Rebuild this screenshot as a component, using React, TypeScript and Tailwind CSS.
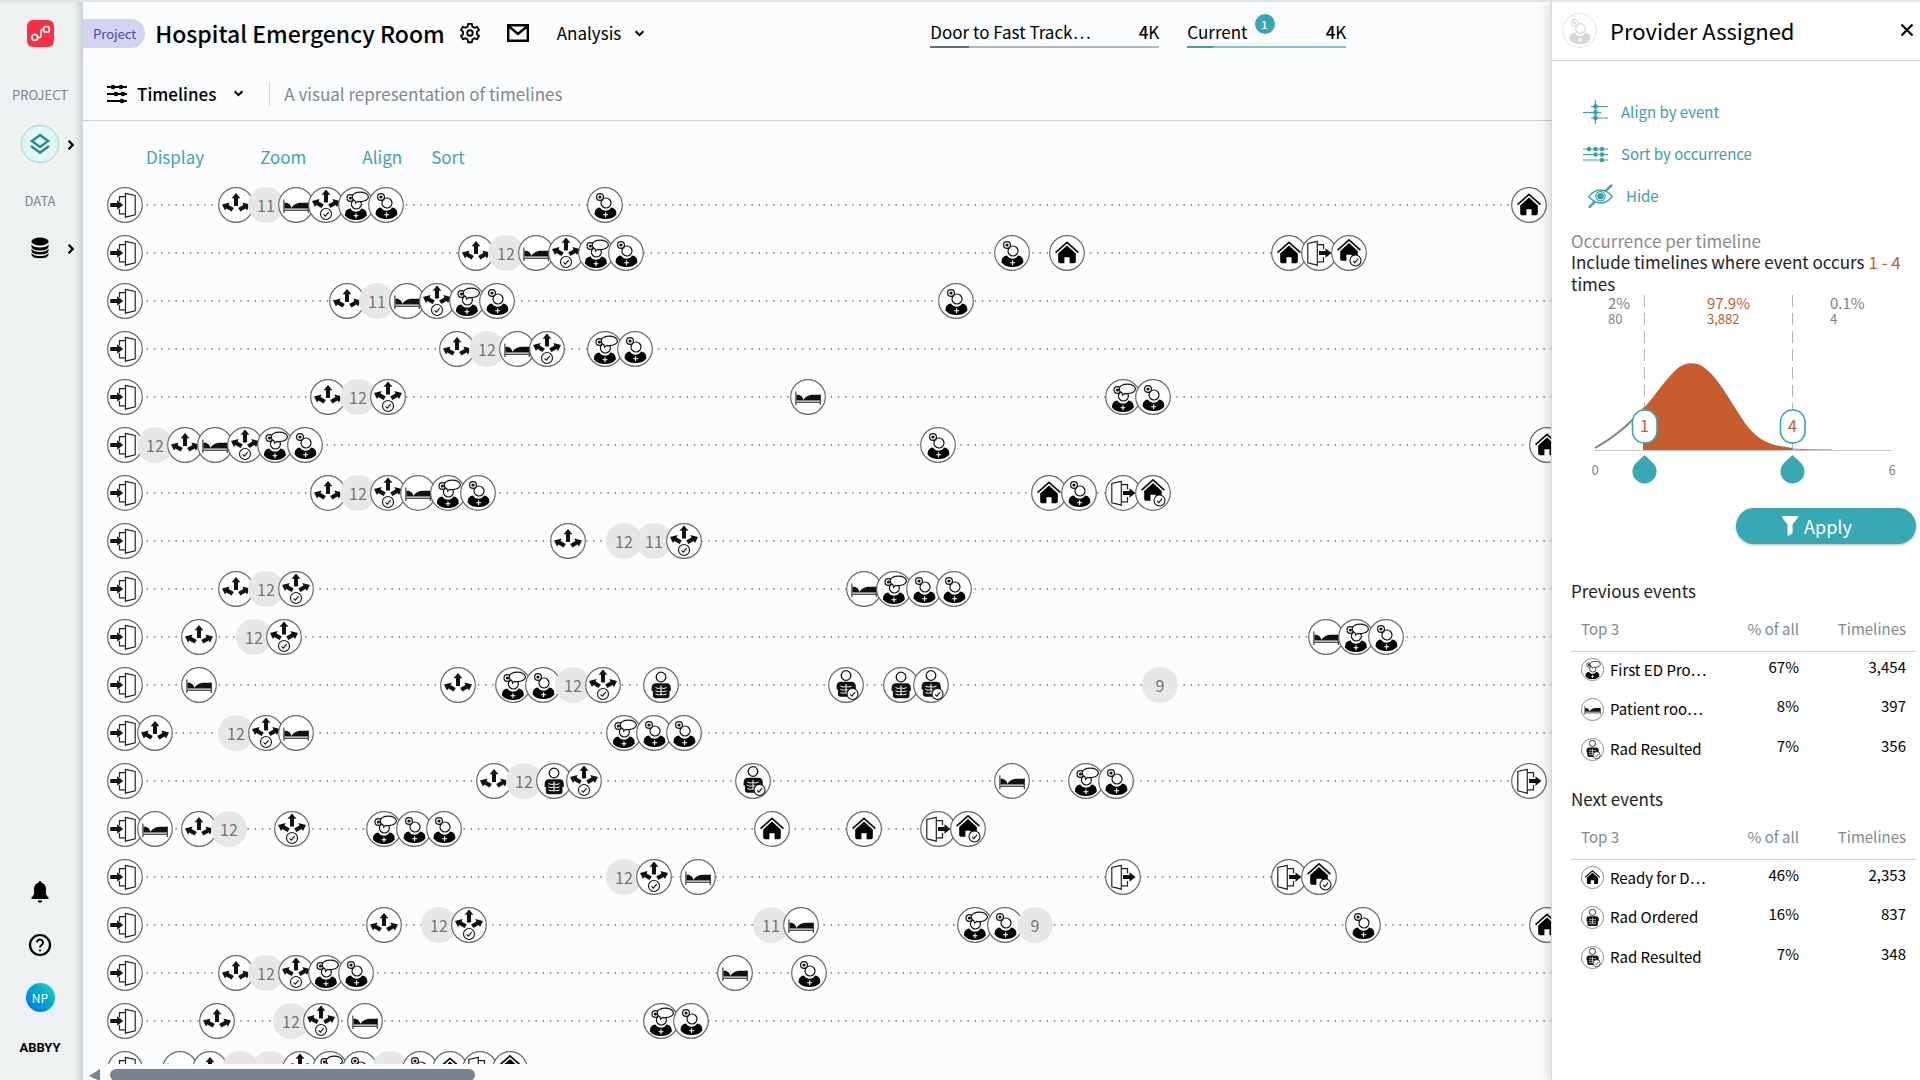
import React from "react";

type Kind = "entry" | "exit" | "triage" | "triaged" | "bed" | "provider" | "first" | "rad" | "radDone" | "home" | "homeDone";
type Mark = { x: number; kind?: Kind; count?: number };
type Row = { marks: Mark[]; end?: number };

const CODES: Record<string, Kind> = {
  E: "entry", X: "exit", A: "triage", S: "triaged", B: "bed", P: "provider",
  F: "first", R: "rad", C: "radDone", H: "home", D: "homeDone",
};

/** "X:item item" groups: X is the first centre, following items sit 30px apart. */
function row(spec: string, ends = false): Row {
  const marks: Mark[] = [];
  for (const group of spec.split(" ")) {
    const [start, items] = group.split(":");
    items.split(",").forEach((item, i) => {
      const x = Number(start) + i * 30;
      marks.push(CODES[item] ? { x, kind: CODES[item] } : { x, count: Number(item) });
    });
  }
  return { marks, end: ends ? marks[marks.length - 1].x : undefined };
}

const ROWS: Row[] = [
  row("42:E 153:A,11,B,S,F,P 522:P 1446:H"),
  row("42:E 393:A,12,B,S,F,P 929:P 984:H 1206:H,X,D", true),
  row("42:E 264:A,11,B,S,F,P 873:P"),
  row("42:E 374:A,12,B,S 522:F,P"),
  row("42:E 245:A,12,S 725:B 1040:F,P"),
  row("42:E 72:12,A,B,S,F,P 855:P 1464:H"),
  row("42:E 245:A,12,S,B,F,P 966:H,P 1040:X,D", true),
  row("42:E 485:A 541:12,11,S"),
  row("42:E 153:A,12,S 781:B,F,P,P"),
  row("42:E 116:A 171:12,S 1243:B,F,P"),
  row("42:E 116:B 375:A 430:F,P,12,S 578:R 763:C 818:R,C 1077:9"),
  row("42:E 72:A 153:12,S,B 541:F,P,P"),
  row("42:E 411:A,12,R,S 670:C 929:B 1003:F,P 1446:X"),
  row("42:E 72:B 116:A,12 209:S 301:F,P,P 689:H 781:H 855:X,D", true),
  row("42:E 541:12,S 615:B 1040:X 1206:X,D", true),
  row("42:E 301:A 356:12,S 688:11,B 892:F,P,9 1280:P 1464:H"),
  row("42:E 153:A,12,S,F,P 652:B 726:P"),
  row("42:E 134:A 208:12,S 282:B 578:F,P"),
  row("42:E 97:B,A,12,12,S,F,P,9,P,H,X,D", true),
];

function Check({ cx, cy }: { cx: number; cy: number }) {
  return (
    <g fill="#fff" stroke="#111" strokeWidth="1.1">
      <circle cx={cx} cy={cy} r="5.5" />
      <path d={`M${cx - 2.4} ${cy + 0.3}l1.7 1.8 3.4-4`} fill="none" />
    </g>
  );
}

const Arrows = () => (
  <g fill="#111">
    <path d="M18 6l4.4 5.200h-2.400v7.800h-4v-7.800h-2.400z" />
    <path d="M4 17.400l7.600-1.800-1 2.400 5.200 3-2.200 3.400-5.200-3-1.400 2z" />
    <path d="M32 17.400l-7.600-1.800 1 2.400-5.200 3 2.200 3.400 5.200-3 1.400 2z" />
  </g>
);

const House = () => (
  <g>
    <path d="M6.600 17.600L18 7.400l11.400 10.200" fill="none" stroke="#111" strokeWidth="1.800" />
    <path d="M18 10.600l8.800 7.800V26.400q0 1.800-1.800 1.800h-4.400v-6h-5.200v6H11q-1.800 0-1.800-1.800V18.400z" fill="#000" />
  </g>
);

const Body = () => (
  <g>
    <path d="M7.600 27.400c0-4.600 2-6.600 5.400-7 1.400 2.300 3.400 3.300 5.600 3.300s4.200-1 5.400-3.300c3.400.4 5.400 2.400 5.400 7-2.400 3-6 4.600-10.800 4.600S9.800 30.400 7.600 27.400z" fill="#000" />
    <path d="M18.600 25.200v5M16.100 27.700h5" stroke="#fff" strokeWidth="1.100" />
  </g>
);

const Scope = () => (
  <g>
    <circle cx="19" cy="16" r="5" fill="#fff" stroke="#111" strokeWidth="1.200" />
    <circle cx="13" cy="10" r="3.400" fill="#fff" stroke="#111" strokeWidth="1.200" />
    <circle cx="13" cy="10" r="1.600" fill="#111" />
  </g>
);

const Ribs = () => (
  <g>
    <circle cx="18" cy="10" r="4.800" fill="#fff" stroke="#111" strokeWidth="1.300" />
    <path d="M13 16.200h10.400q4.400 0 4.400 5v2.800h-1.300v4.500q0 2.700-2.700 2.700H12.600q-2.700 0-2.700-2.700V24H8.600v-2.800q0-5 4.400-5z" fill="#111" />
    <path d="M18 18.500v10M12.500 20.500c2 1.400 4 .8 5.300.6M23.500 20.500c-2 1.400-4 .8-5.300.6M12.300 23.700c2 1.400 4 .8 5.500.6M23.700 23.700c-2 1.400-4 .8-5.500.6M12.500 27c2 1.200 4 .6 5.300.4M23.500 27c-2 1.200-4 .6-5.300.4" fill="none" stroke="#fff" strokeWidth="1" />
  </g>
);

function Glyph({ kind }: { kind: Kind }) {
  switch (kind) {
    case "entry":
      return (
        <g>
          <path d="M18.500 9.700h-6v4.500M12.500 22v4.800h6" fill="none" stroke="#222" strokeWidth="1.200" />
          <path d="M18.500 6.400l9.700 2v19.400l-9.700 2.400z" fill="#fff" stroke="#222" strokeWidth="1.200" />
          <path d="M3.200 16h7v-2.800l6 4.800-6 4.800V20h-7z" fill="#111" />
        </g>
      );
    case "exit":
      return (
        <g>
          <path d="M16.500 9.700h6v4.500M22.500 22v4.800h-6" fill="none" stroke="#222" strokeWidth="1.200" />
          <path d="M16.300 6.400l-9.500 2v19.400l9.500 2.400z" fill="#fff" stroke="#222" strokeWidth="1.200" />
          <path d="M18 16h6.500v-2.800l6 4.800-6 4.800V20H18z" fill="#111" />
        </g>
      );
    case "triage":
      return <Arrows />;
    case "triaged":
      return (
        <g>
          <g transform="translate(0 -3.500)"><Arrows /></g>
          <Check cx={18} cy={27} />
        </g>
      );
    case "bed":
      return (
        <g>
          <path d="M5.900 12.500v13.500M30.300 15.500v10.500" stroke="#333" strokeWidth="1.100" />
          <path d="M6.500 15.800c4-.6 6.300 2 6.800 5 2.500-3.600 5.500-5 10-5.100h7v5.900H6.500z" fill="#111" />
          <path d="M6 23.300h24.300" stroke="#555" strokeWidth="1.500" />
        </g>
      );
    case "provider":
      return <g><Body /><Scope /></g>;
    case "first":
      return (
        <g>
          <g transform="translate(-.6 1)"><Body /><Scope /></g>
          <path d="M17.600 16.200l-.6-2.300c-1.800-.8-2.800-2.200-2.800-4C14.200 7.300 17.800 5.200 22.300 5.200s8.100 2.100 8.100 4.700-3.600 4.700-8.100 4.700c-.9 0-1.900-.1-2.700-.3z" fill="#fff" stroke="#111" strokeWidth="1.200" />
        </g>
      );
    case "rad":
      return <Ribs />;
    case "radDone":
      return <g><g transform="translate(0 -1.500)"><Ribs /></g><Check cx={24.5} cy={27} /></g>;
    case "home":
      return <House />;
    case "homeDone":
      return <g><g transform="translate(0 -2.500)"><House /></g><Check cx={24.5} cy={25.5} /></g>;
  }
}

function EventIcon({ kind, className }: { kind: Kind; className: string }) {
  return (
    <svg viewBox="0 0 36 36" className={className} aria-hidden="true">
      <circle cx="18" cy="18" r="17.300" fill="#fff" stroke="#6b6b6b" strokeWidth="1.200" />
      <Glyph kind={kind} />
    </svg>
  );
}

function Chevron({ className }: { className: string }) {
  return (
    <svg viewBox="0 0 10 10" className={className} fill="none" stroke="#000" strokeWidth="1.800" aria-hidden="true">
      <path d="M1.500 3l3.500 3.500L8.500 3" />
    </svg>
  );
}

function Sidebar() {
  return (
    <nav className="flex w-[83px] shrink-0 flex-col items-center bg-[#edf1f2] pr-[3px] shadow-[inset_-8px_0_7px_-5px_#c3c8ca]">
      <a href="#home" aria-label="Home" className="mt-[18px]">
        <svg viewBox="0 0 27 27" className="size-[27px]">
          <rect width="27" height="27" rx="6" fill="#fb2f41" />
          <g fill="none" stroke="#fff" strokeWidth="1.700">
            <circle cx="7.700" cy="17.500" r="3" />
            <path d="M10.700 17.500h1.500q1.800 0 1.800-1.800v-4.600q0-1.800 1.800-1.800h1" />
            <rect x="16.800" y="6.600" width="5.400" height="5.400" rx="1" />
          </g>
        </svg>
      </a>
      <span className="mt-[38px] text-[13px] leading-5 text-[#7b858c]">PROJECT</span>
      <button aria-label="Project" className="mt-5 grid size-[38px] place-items-center rounded-full border border-[#8ed5d6] bg-[#e2f6f7]">
        <svg viewBox="0 0 22 22" className="size-[22px]" fill="none" stroke="#2c8a90" strokeWidth="2.500">
          <path d="M11 2l8 6-8 6-8-6zM2 13l9 6.800 9-6.800" />
        </svg>
      </button>
      <div className="relative h-0 w-full">
        <Chevron className="absolute -top-6 right-[3px] size-3 -rotate-90" />
      </div>
      <span className="mt-7 text-[13px] leading-5 text-[#7b858c]">DATA</span>
      <button aria-label="Data" className="mt-[26px] grid size-[22px] place-items-center">
        <svg viewBox="0 0 20 22" className="h-[22px] w-5">
          <ellipse cx="10" cy="4.500" rx="8.500" ry="4" />
          <path d="M1.500 7.500q2 3 8.500 3t8.500-3V10q-1 3.500-8.500 3.500T1.500 10zM1.500 12q2 3 8.500 3t8.500-3v2q-1 3.500-8.500 3.500T1.500 14zM1.500 16q2 3 8.500 3t8.500-3v1.800q-1 3.500-8.500 3.500t-8.500-3.500z" />
        </svg>
      </button>
      <div className="relative h-0 w-full">
        <Chevron className="absolute -top-4 right-[3px] size-3 -rotate-90" />
      </div>
      <button aria-label="Notifications" className="mt-auto">
        <svg viewBox="0 0 18 22" className="h-[22px] w-[18px]">
          <path d="M9 0q1.600 0 1.600 1.700Q15 3 15 8.500v5l2.500 3.300V18H.5v-1.200L3 13.500v-5Q3 3 7.400 1.700 7.400 0 9 0zM6.800 19.500h4.400Q11 21.700 9 21.700t-2.200-2.200z" />
        </svg>
      </button>
      <button aria-label="Help" className="mt-[30px]">
        <svg viewBox="0 0 24 24" className="size-6" fill="none" stroke="#000">
          <circle cx="12" cy="12" r="10" strokeWidth="2.200" />
          <path d="M9 9.500a3 3 0 1 1 4.600 2.500Q12 13 12 14.500" strokeWidth="2" />
          <circle cx="12" cy="17.500" r=".7" fill="#000" />
        </svg>
      </button>
      <button className="mt-[26px] size-[29px] rounded-full bg-linear-to-tr from-[#1668e8] to-[#2bd9b0] text-xs leading-[29px] text-white">NP</button>
      <span className="mt-[26px] mb-[22px] font-[Roboto,sans-serif] text-[13px] leading-5 font-bold text-black">ABBYY</span>
    </nav>
  );
}

function Header() {
  return (
    <header className="border-b border-[#ccd1d4] pt-[3px]">
      <div className="flex h-14 items-center">
        <span className="h-[29px] rounded-r-[14px] bg-[#d3d4ef] pr-[9px] pl-[10px] text-[13px] leading-[29px] text-[#4b45b5]">Project</span>
        <h1 className="ml-[10px] text-[23px] leading-8 font-medium text-black">Hospital Emergency Room</h1>
        <button aria-label="Settings" className="ml-[14px]">
          <svg viewBox="0 0 24 24" className="size-[22px]" fill="none" stroke="#000" strokeWidth="2">
            <path d="M10 2h4l.6 3 2.300 1.300 2.900-1 2 3.500-2.300 2v2.500l2.300 2-2 3.500-2.900-1-2.300 1.300-.6 3h-4l-.6-3-2.300-1.300-2.900 1-2-3.500 2.300-2v-2.500l-2.300-2 2-3.500 2.900 1L9.400 5z" />
            <circle cx="12" cy="12" r="3" />
          </svg>
        </button>
        <button aria-label="Messages" className="ml-[26px]">
          <svg viewBox="0 0 22 18" className="h-[18px] w-[22px]" fill="none" stroke="#000" strokeWidth="2.400">
            <path d="M1.200 1.200h19.600v15.600H1.200zM2 2.500l9 7.500 9-7.500" />
          </svg>
        </button>
        <button className="ml-7 flex items-center gap-[13px] text-[17px] leading-6 text-black">
          Analysis <Chevron className="size-[11px]" />
        </button>
        <div className="ml-[285px] w-[229px]">
          <div className="flex justify-between text-[17px] leading-7 text-black">
            <span>Door to Fast Track…</span>
            <span><span className="font-medium">4</span>K</span>
          </div>
          <div className="flex h-0.5 bg-[#b0b6be]"><div className="w-[39px] bg-[#666a70]" /></div>
        </div>
        <div className="ml-7 w-[159px]">
          <div className="flex text-[17px] leading-7 text-black">
            <span>Current</span>
            <span className="-mt-1 ml-[7px] size-5 rounded-full bg-[#37a7b2] text-center text-[11px] leading-5 font-medium text-white">1</span>
            <span className="ml-auto"><span className="font-medium">4</span>K</span>
          </div>
          <div className="flex h-0.5 bg-[#7ec8cd]"><div className="w-[26px] bg-[#3fa3ad]" /></div>
        </div>
      </div>
      <div className="flex h-[59px] items-center pt-[6px] pl-6">
        <button className="flex items-center text-[17px] leading-6 font-medium text-black">
          <svg viewBox="0 0 20 20" className="size-5" stroke="#000" strokeWidth="1.800" aria-hidden="true">
            <path d="M0 3h20M0 10h20M0 17h20" />
            <g stroke="none"><circle cx="6" cy="3" r="2.300" /><circle cx="14" cy="3" r="2.300" /><circle cx="9" cy="10" r="2.300" /><circle cx="16" cy="10" r="2.300" /><circle cx="15" cy="17" r="2.300" /></g>
          </svg>
          <span className="ml-[10px]">Timelines</span>
          <Chevron className="ml-[17px] size-[11px]" />
        </button>
        <span className="ml-[25px] h-6 w-px bg-[#d0d4d8]" />
        <p className="ml-[14px] text-[17px] leading-6 text-[#808990]">A visual representation of timelines</p>
      </div>
    </header>
  );
}

function Timeline({ data }: { data: Row }) {
  return (
    <div className="relative h-12">
      <svg className="absolute inset-y-0 left-[42px] h-full w-[calc(100%-42px)]" aria-hidden="true">
        <line x1="0" x2={data.end ? data.end - 42 : "100%"} y1="24" y2="24" stroke="#777" strokeWidth="1.500" strokeDasharray="1.500 5.700" />
      </svg>
      {data.marks.map((m, i) =>
        m.kind ? (
          <div key={i} className="absolute top-[6px] -ml-[18px] size-9" style={{ left: m.x }}>
            <EventIcon kind={m.kind} className="size-9" />
          </div>
        ) : (
          <div key={i} className="absolute top-[6px] -ml-[18px] size-9 rounded-full bg-[#e7e7e7] text-center text-base leading-9 text-[#757575]" style={{ left: m.x }}>
            {m.count}
          </div>
        ),
      )}
    </div>
  );
}

function Distribution() {
  return (
    <div className="relative h-[200px]">
      <svg viewBox="0 0 345 200" className="h-[200px] w-[345px]" role="img" aria-label="Occurrence distribution">
        <path d="M73.500 0v155M221.500 0v155" stroke="#b4b4b4" strokeWidth="1" strokeDasharray="12 6" />
        <path d="M24 153C45 141 56 131 73.500 113" fill="none" stroke="#7a8490" strokeWidth="2" />
        <path d="M72 155V114C84 101 96 82 107 73 114 67 124 67 131 71 149 83 160 109 177 132 188 145 198 149 209 151L221.500 153V155z" fill="#c75c2e" />
        <path d="M221.500 154q12 1 40 1" fill="none" stroke="#7a8490" strokeWidth="1" />
        <path d="M24 155.500h297" stroke="#c9c9c9" strokeWidth="1" />
        <g fill="#fff" stroke="#37a7b2" strokeWidth="1.600">
          <rect x="61.500" y="115" width="24.500" height="33" rx="12" />
          <rect x="209.500" y="115" width="24.500" height="33" rx="12" />
        </g>
        <g fill="#37a9b4">
          <path d="M73.500 160l9 8.500a12 12 0 1 1-18 0z" />
          <path d="M221.500 160l9 8.500a12 12 0 1 1-18 0z" />
        </g>
        <g className="text-[15px]" fill="#7a8490">
          <text x="37" y="14">2%</text>
          <text x="259" y="14">0.1%</text>
        </g>
        <text x="136" y="14" className="text-[15px]" fill="#c75c2e">97.9%</text>
        <text x="136" y="29" className="text-[13px]" fill="#c75c2e">3,882</text>
        <g className="text-[13px]" fill="#7a8490">
          <text x="37" y="29">80</text>
          <text x="259" y="29">4</text>
          <text x="24" y="180" textAnchor="middle">0</text>
          <text x="321" y="180" textAnchor="middle">6</text>
        </g>
        <g className="text-base" fill="#c75c2e" textAnchor="middle">
          <text x="73.500" y="137">1</text>
          <text x="221.500" y="137">4</text>
        </g>
      </svg>
      <input type="range" aria-label="Minimum occurrences" min="0" max="6" defaultValue="1" className="absolute top-[160px] left-3 h-7 w-[120px] opacity-0" />
      <input type="range" aria-label="Maximum occurrences" min="0" max="6" defaultValue="4" className="absolute top-[160px] left-[140px] h-7 w-[190px] opacity-0" />
    </div>
  );
}

type EventRow = [Kind, string, string, string];

function EventTable({ title, rows }: { title: string; rows: EventRow[] }) {
  return (
    <section className="mb-4">
      <h3 className="text-[17px] leading-6 text-[#222]">{title}</h3>
      <table className="mt-[10px] w-full table-fixed text-[15px] leading-6">
        <thead>
          <tr className="h-[38px] border-b border-[#cdd2d5] text-left text-[#808990]">
            <th className="w-[128px] pb-[6px] pl-[10px] font-normal">Top 3</th>
            <th className="pb-[6px] text-right font-normal">% of all</th>
            <th className="w-[117px] pr-[10px] pb-[6px] text-right font-normal">Timelines</th>
          </tr>
        </thead>
        <tbody className="text-black">
          {rows.map(([kind, name, share, count]) => (
            <tr key={name} className="h-10 align-top">
              <td className="pt-[6px] pl-[10px]">
                <div className="flex items-center gap-[6px] whitespace-nowrap">
                  <EventIcon kind={kind} className="size-[23px] shrink-0" />
                  {name}
                </div>
              </td>
              <td className="pt-[3px] text-right">{share}</td>
              <td className="pt-[3px] pr-[10px] text-right">{count}</td>
            </tr>
          ))}
        </tbody>
      </table>
    </section>
  );
}

function Panel() {
  return (
    <aside className="z-10 flex w-[369px] shrink-0 flex-col border-l border-[#d5d9db] bg-white shadow-[-4px_0_10px_#0000001f]">
      <div className="flex h-[59px] items-center border-b border-[#ccd1d4] pr-[6px] pb-[2px] pl-[10px]">
        <EventIcon kind="provider" className="size-[35px] opacity-15" />
        <h2 className="ml-[13px] text-[22px] leading-8 text-black">Provider Assigned</h2>
        <button aria-label="Close" className="ml-auto">
          <svg viewBox="0 0 14 14" className="size-[14px]" stroke="#000" strokeWidth="2.200"><path d="M1.500 1.500l11 11M12.500 1.500l-11 11" /></svg>
        </button>
      </div>
      <div className="flex flex-col pt-[30px] pl-[31px] text-[15px] text-[#37a1aa]">
        <button className="flex h-[42px] items-center gap-[13px]">
          <svg viewBox="0 0 25 24" className="h-6 w-[25px]" stroke="#37a1aa" strokeWidth="1.200" aria-hidden="true">
            <path d="M12.500 0v24M8 6.500h17M0 12.500h18M8 18h17" />
            <g fill="#37a1aa" stroke="none"><circle cx="12.500" cy="6.500" r="2.400" /><circle cx="12.500" cy="12.500" r="2.400" /><circle cx="12.500" cy="18" r="2.400" /></g>
          </svg>
          Align by event
        </button>
        <button className="flex h-[42px] items-center gap-[13px]">
          <svg viewBox="0 0 25 18" className="h-[18px] w-[25px]" stroke="#37a1aa" strokeWidth="1.200" aria-hidden="true">
            <path d="M0 4h25M0 9.500h25M0 15h25" />
            <g fill="#37a1aa" stroke="none"><circle cx="6" cy="4" r="2.200" /><circle cx="12.500" cy="4" r="2.200" /><circle cx="19" cy="4" r="2.200" /><circle cx="12.500" cy="9.500" r="2.200" /><circle cx="19" cy="9.500" r="2.200" /><circle cx="19" cy="15" r="2.200" /></g>
          </svg>
          Sort by occurrence
        </button>
        <button className="ml-[5px] flex h-[42px] items-center gap-[13px]">
          <svg viewBox="0 0 25 24" className="h-6 w-[25px]" fill="none" stroke="#37a1aa" strokeWidth="1.300" aria-hidden="true">
            <path d="M.8 12.500Q6 6 12.500 6t11.700 6.500Q19 19 12.500 19T.8 12.500z" />
            <circle cx="12.500" cy="12.300" r="4.600" />
            <circle cx="12.500" cy="12.300" r="2.600" fill="#37a1aa" />
            <path d="M24 .8L17.500 7M7.500 17L1 23.500" strokeWidth="2.400" />
          </svg>
          Hide
        </button>
      </div>
      <div className="pt-[13px] pr-1 pl-[19px]">
        <h3 className="text-[17px] leading-[21px] text-[#8a8a8a]">Occurrence per timeline</h3>
        <p className="text-[17px] leading-[22px] text-[#222]">
          Include timelines where event occurs <span className="text-[#c75c2e]">1 - 4</span> times
        </p>
        <Distribution />
        <button className="mt-[13px] ml-auto flex h-9 w-[180px] items-center justify-center gap-[6px] rounded-full bg-[#37a9b4] pr-[18px] text-lg text-white shadow-[0_1px_3px_#0004]">
          <svg viewBox="0 0 16 20" className="h-5 w-4" fill="#fff" aria-hidden="true"><path d="M0 0h16v1.500l-5.500 7v9L5.500 20V8.500L0 1.500z" /></svg>
          Apply
        </button>
        <div className="pt-[35px]">
          <EventTable title="Previous events" rows={[["first", "First ED Pro…", "67%", "3,454"], ["bed", "Patient roo…", "8%", "397"], ["radDone", "Rad Resulted", "7%", "356"]]} />
          <EventTable title="Next events" rows={[["home", "Ready for D…", "46%", "2,353"], ["rad", "Rad Ordered", "16%", "837"], ["radDone", "Rad Resulted", "7%", "348"]]} />
        </div>
      </div>
    </aside>
  );
}

export default function App() {
  return (
    <div className="flex h-screen overflow-hidden border-t-2 border-[#e0e4e6] bg-[#fafcfd] font-['Noto_Sans_CJK_SC',sans-serif]">
      <Sidebar />
      <main className="flex min-w-0 flex-1 flex-col">
        <Header />
        <div className="flex h-[60px] items-center pt-3 pl-[63px] text-[17px] leading-6 text-[#3fa5ae]">
          <button>Display</button>
          <button className="ml-14">Zoom</button>
          <button className="ml-14">Align</button>
          <button className="ml-[29px]">Sort</button>
        </div>
        <div className="min-h-0 flex-1 overflow-hidden">
          {ROWS.map((r, i) => (
            <Timeline key={i} data={r} />
          ))}
        </div>
        <div className="flex h-4 items-start gap-[10px] pt-[5px] pl-[6px]" aria-hidden="true">
          <svg viewBox="0 0 11 12" className="h-3 w-[11px]"><path d="M11 0v12L0 7z" fill="#77838d" /></svg>
          <div className="h-3 w-[365px] rounded-full bg-[#77838d]" />
        </div>
      </main>
      <Panel />
    </div>
  );
}
